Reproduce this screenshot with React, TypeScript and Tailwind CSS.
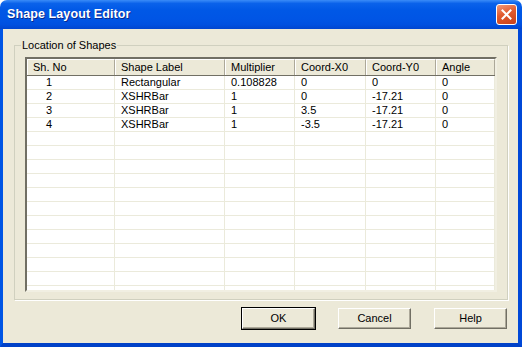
import React from 'react';

const font = { fontFamily: '"Liberation Sans", Arial, sans-serif' };

const columns = [
  { label: 'Sh. No', w: 'w-[88px]' },
  { label: 'Shape Label', w: 'w-[110px]' },
  { label: 'Multiplier', w: 'w-[70px]' },
  { label: 'Coord-X0', w: 'w-[71px]' },
  { label: 'Coord-Y0', w: 'w-[70px]' },
  { label: 'Angle', w: 'w-[59px]' },
];

const rows: string[][] = [
  ['1', 'Rectangular', '0.108828', '0', '0', '0'],
  ['2', 'XSHRBar', '1', '0', '-17.21', '0'],
  ['3', 'XSHRBar', '1', '3.5', '-17.21', '0'],
  ['4', 'XSHRBar', '1', '-3.5', '-17.21', '0'],
];

// pad out the grid with empty lines like the list view does
const allRows = [...rows, ...Array.from({ length: 12 }, () => ['', '', '', '', '', ''])];

const Button: React.FC<{ label: string; isDefault?: boolean }> = ({ label, isDefault }) => (
  <button
    className={`w-[75px] h-[23px] bg-[#ece9d8] text-[11px] text-black ${
      isDefault ? 'border border-black' : 'border border-transparent'
    }`}
  >
    <div className="h-full w-full flex items-center justify-center border-t border-l border-t-white border-l-white border-b border-r border-b-[#716f64] border-r-[#716f64] shadow-[inset_-1px_-1px_0_#aca899]">
      {label}
    </div>
  </button>
);

const ShapeLayoutEditor: React.FC = () => {
  return (
    <div className="w-[522px] h-[347px] flex flex-col bg-white overflow-hidden" style={font}>
      {/* title bar */}
      <div className="h-[29px] shrink-0 rounded-t-[7px] flex items-center justify-between pl-[7px] pr-[5px] bg-[linear-gradient(180deg,#3a8cf8_0%,#0a62ea_12%,#0058e6_35%,#0055e5_65%,#0050e0_85%,#0145cf_100%)]">
        <span className="text-white font-bold text-[12.5px] [text-shadow:1px_1px_0_#0b2b8f] tracking-[0.1px]">
          Shape Layout Editor
        </span>
        <div className="w-[21px] h-[21px] rounded-[3px] border border-white flex items-center justify-center bg-[linear-gradient(160deg,#f09a7a_0%,#e15a2e_45%,#c7411a_100%)]">
          <svg width="11" height="11" viewBox="0 0 11 11">
            <path d="M1.5 1.5 L9.5 9.5 M9.5 1.5 L1.5 9.5" stroke="white" strokeWidth="2" strokeLinecap="square" />
          </svg>
        </div>
      </div>

      {/* window body */}
      <div className="flex-1 flex flex-col bg-[#ece9d8] border-l-[3px] border-r-[4px] border-b-[4px] border-l-[#0055e5] border-r-[#0048d8] border-b-[#0041c8] pt-[10px] pl-[11px] pr-[10px] pb-[11px]">
        <fieldset className="border border-[#d0d0bf] shadow-[1px_1px_0_white]">
          <legend className="ml-[6px] px-[1px] text-[11px] leading-[13px] text-black">Location of Shapes</legend>
          <div className="px-[10px] pb-[7px] pt-[5px]">
            <div className="h-[235px] w-[472px] bg-white border-l-2 border-t-2 border-l-[#716f64] border-t-[#716f64] border-r-2 border-b-2 border-r-[#f1efe2] border-b-[#f1efe2] overflow-hidden flex flex-col">
              <div className="flex h-[17px] shrink-0 bg-[#ece9d8] border-b border-b-[#716f64]">
                {columns.map((c) => (
                  <div
                    key={c.label}
                    className={`${c.w} shrink-0 h-full flex items-center pl-[5px] text-[11px] text-black border-t border-l border-t-white border-l-white border-r border-r-[#aca899] whitespace-nowrap overflow-hidden`}
                  >
                    {c.label}
                  </div>
                ))}
              </div>
              {allRows.map((r, i) => (
                <div key={i} className="flex h-[14px] shrink-0 border-b border-b-[#ebeadb]">
                  {r.map((v, j) => (
                    <div
                      key={j}
                      className={`${columns[j].w} shrink-0 h-full flex items-center text-[11px] leading-[13px] text-black border-r border-r-[#ebeadb] ${
                        j === 0 ? 'pl-[19px]' : 'pl-[6px]'
                      }`}
                    >
                      {v}
                    </div>
                  ))}
                </div>
              ))}
            </div>
          </div>
        </fieldset>

        <div className="flex justify-end gap-[21px] mt-[7px]">
          <Button label="OK" isDefault />
          <Button label="Cancel" />
          <Button label="Help" />
        </div>
      </div>
    </div>
  );
};

export default function App() {
  return <ShapeLayoutEditor />;
}
